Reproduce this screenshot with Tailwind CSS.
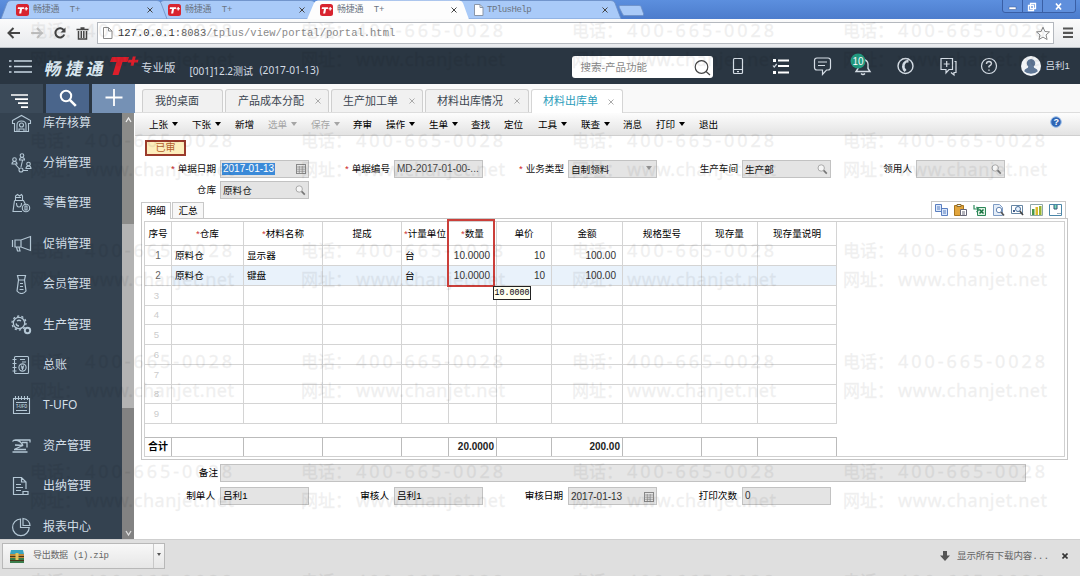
<!DOCTYPE html>
<html>
<head>
<meta charset="utf-8">
<title>畅捷通 T+</title>
<script src="https://cdn.jsdelivr.net/npm/@tailwindcss/browser@4"></script>
</head>
<body class="relative flex h-[576px] w-[1080px] flex-col overflow-hidden bg-white font-['Liberation_Sans','Noto_Sans_CJK_SC',sans-serif] text-[9.6px] leading-none text-black">

<svg class="hidden">
  <defs>
    <g id="fav"><rect width="13" height="12" rx="2.5" fill="#d8242f"/><path d="M2 3.2h6.2l-.4 1.9H6.1L5.2 9.6H3.1L4 5.1H1.7zM9.6 3h1.2v1.2H12v1.1h-1.2v1.2H9.6V5.3H8.5V4.2h1.1z" fill="#fff"/></g>
    <g id="x"><path d="M.5.5l5 5M5.5.5l-5 5" fill="none" stroke="currentColor"/></g>
    <g id="lens"><circle cx="4.2" cy="4" r="3.2" fill="#f6f6f6" stroke="#aaa" stroke-width="1"/><path d="M6.600 6.400l3.200 3.200" stroke="#777" stroke-width="1.700"/></g>
    <g id="cal"><rect x=".5" y=".5" width="9" height="9" fill="#e4e4e4" stroke="#888"/><path d="M1 3h8M1 5.200h8M1 7.300h8M3.300 2v7M6.200 2v7" stroke="#888" stroke-width=".7"/></g>
    <g id="wm" fill="#000" stroke="#000" stroke-width=".35" font-family="'Noto Sans','Noto Sans CJK SC',sans-serif" font-size="18">
      <text x="0" y="7" font-size="17">电话：</text><text x="55" y="7" textLength="147">400-665-0028</text>
      <text x="0" y="36" font-size="17">网址：</text><text x="55" y="36" textLength="149">www.chanjet.net</text>
    </g>
  </defs>
</svg>

<!-- browser tabs -->
<div class="relative h-[19px] shrink-0 bg-linear-to-b from-[#5c8fde] to-[#4c7ccc]">
  <svg class="absolute left-0 top-0" width="660" height="19">
    <g fill="#a9caf8" stroke="#6d8fc4" stroke-width=".8">
      <path d="M461 19l-6-16q-1-2.500 2-2.500H611q3 0 4 2.500l6 16z"/>
      <path d="M154 19l6-16q1-2.500 4-2.500H311q3 0 4 2.500l6 16z"/>
      <path d="M1 19l6-16q1-2.500 4-2.500H157q3 0 4 2.500l6 16z"/>
      <path d="M620 5.500h19q1.500 0 2 1l2.500 7q.5 2-1 2h-18q-1.500 0-2-1.500l-3.500-7q0-1.500 1-1.500z"/>
    </g>
    <path d="M307 19.500l7-16.500q1-2.500 4-2.500H459q3 0 4 2.500l6 16.500z" fill="#fdfdfd"/>
  </svg>
  <div class="relative flex h-full items-center pl-4 pt-px font-['Liberation_Mono','Noto_Sans_CJK_SC',monospace] text-[9px] text-[#6a7482]">
    <div class="flex w-[152px] items-center"><svg width="13" height="12"><use href="#fav"/></svg><span class="ml-1 mt-px flex-1 whitespace-pre tracking-[-0.2px]">畅捷通  T+</span><svg class="mr-[15px] text-[#444]" width="6" height="6"><use href="#x"/></svg></div>
    <div class="flex w-[152px] items-center"><svg width="13" height="12"><use href="#fav"/></svg><span class="ml-1 mt-px flex-1 whitespace-pre tracking-[-0.2px]">畅捷通  T+</span><svg class="mr-[15px] text-[#444]" width="6" height="6"><use href="#x"/></svg></div>
    <div class="flex w-[152px] items-center"><svg width="13" height="12"><use href="#fav"/></svg><span class="ml-1 mt-px flex-1 whitespace-pre tracking-[-0.2px]">畅捷通  T+</span><svg class="mr-[15px] text-[#444]" width="6" height="6"><use href="#x"/></svg></div>
    <div class="flex w-[152px] items-center pl-0.5"><svg width="10" height="12"><path d="M.5.5h5.500l3 3v8h-8.500z" fill="#fff" stroke="#8a96a8"/><path d="M6 .5v3h3" fill="none" stroke="#8a96a8"/></svg><span class="ml-[3px] mt-px flex-1 tracking-[-0.5px]">TPlusHelp</span><svg class="mr-[16px] text-[#444]" width="6" height="6"><use href="#x"/></svg></div>
  </div>
  <svg class="absolute right-[3px] top-0" width="75" height="13">
    <path d="M.5 0v10q0 2.500 2.500 2.500H71q2.500 0 2.500-2.500V0M20.500 0v12M40.500 0v12" fill="#5f8fdc" stroke="#3a5fa5"/>
    <rect x="7" y="7" width="7" height="2.500" fill="#fff" stroke="#38568e" stroke-width=".5"/>
    <path d="M28.500 3.500h5v5h-5zM26.500 5.500h5v5h-5z" fill="#5f8fdc" stroke="#fff" stroke-width="1.300"/>
    <path d="M54 3.500l5 6M59 3.500l-5 6" stroke="#fff" stroke-width="1.700"/>
  </svg>
</div>

<!-- address bar -->
<div class="flex h-[29px] shrink-0 items-center border-b border-[#b9bec4] bg-linear-to-b from-[#fbfbfb] to-[#e8eaed] pl-[7px]">
  <svg width="86" height="16" fill="none" stroke="#454545" stroke-width="2">
    <path d="M1.500 8H13M6.500 3l-5 5 5 5"/>
    <path d="M24 8h11M30 3l5 5-5 5" stroke="#c6c6c6"/>
    <path d="M57 5.500a4.600 4.600 0 1 0 .3 4"/><path d="M58.500 2.500v5h-5z" fill="#454545" stroke="none"/>
    <path d="M69.500 4.500h12M73.500 3h4M71.500 6v8h8V6M74.300 6v7M76.800 6v7" stroke-width="1.500"/>
  </svg>
  <div class="ml-1 flex h-[22px] w-[957px] items-center border border-[#b4b8be] bg-white pl-[5px] font-['Liberation_Mono',monospace] text-[10.5px]">
    <svg width="10" height="12"><path d="M.5.500h5l3.500 3.500v7.500h-8.500z" fill="#fff" stroke="#8a8a8a"/><path d="M5.500.5v3.500H9" fill="none" stroke="#8a8a8a"/></svg>
    <span class="ml-[5px] mt-px flex-1 text-[#8a8a8a]"><span class="text-[#333]">127.0.0.1</span><span class="text-[#666]">:8083</span>/tplus/view/portal/portal.html</span>
    <svg class="mr-[2px]" width="16" height="15"><path d="M8 1.200l1.900 4.300 4.600.4-3.500 3 1.100 4.600L8 11.100l-4.100 2.400L5 8.900l-3.500-3 4.600-.4z" fill="#fff" stroke="#888"/></svg>
  </div>
  <svg class="ml-[9px]" width="10" height="12"><path d="M0 1.500h10M0 5.800h10M0 10h10" stroke="#555" stroke-width="2.200"/></svg>
</div>

<!-- application header -->
<header class="flex h-9 shrink-0 items-center bg-[#2a3642] pl-[9px] text-[#d5dde5]">
  <svg class="mt-px" width="23" height="15" stroke="#c9d8e4" stroke-width="1.600"><path d="M0 2h2.500M0 7.500h2.500M0 13h2.500M5 2h18M5 7.500h18M5 13h18"/></svg>
  <span class="ml-[13px] mt-[3px] w-[63px] -skew-x-12 whitespace-nowrap text-[17px] font-bold tracking-[4px] text-[#d9e7f0] [font-family:'Noto_Sans_CJK_SC',sans-serif]">畅捷通</span>
  <svg width="32" height="22"><path d="M4 2h17l-1.500 5h-5l-4 13H4.500l4-13H2z" fill="#dd1e2b"/><path d="M24.800 1.500h3l-.8 3.200h3.500l-.7 2.800h-3.500l-.8 3.200h-3l.8-3.200h-3.500l.7-2.800H24z" fill="#dd1e2b"/></svg>
  <span class="ml-[1px] mt-[5px] text-[11.5px]">专业版</span>
  <span class="ml-[14px] mt-[9px] w-[70px] text-[10px] [font-family:'Noto_Sans','Noto_Sans_CJK_SC',sans-serif]">[001]12.2测试</span>
  <span class="mt-[9px] w-[312px] text-[10.2px] [font-family:'Noto_Sans',sans-serif]">(2017-01-13)</span>
  <div class="mt-[2px] flex h-[22px] w-[141px] items-center justify-between rounded-[3px] bg-white pl-[9px] pr-[2px] text-[10.500px] text-[#888]"><span class="mt-px">搜索-产品功能</span><svg width="17" height="17" fill="none" stroke="#444" stroke-width="1.200"><circle cx="7.500" cy="8" r="6.300"/><path d="M12 12.500l4 3.500"/></svg></div>
  <svg class="ml-[14px] -mt-px" width="278" height="34" fill="none" stroke="#d5dde5" stroke-width="1.200">
    <rect x="6.500" y="9.500" width="9" height="15" rx="1"/><path d="M7 20.500h8M10 22.700h2"/>
    <path d="M51 11.500h11M51 17h11M51 23.500h11" stroke="#fff" stroke-width="1.800"/><path d="M46 10h3v3h-3zM46 22h3v3h-3z" fill="#fff" stroke="none"/><path d="M46 16.500l1.200 1.500 2.500-3"/>
    <path d="M90 9h11q2.500 0 2.500 2.500v7q0 2.500-2.500 2.500h-1.500l-4 4.500V21H90q-2.500 0-2.500-2.500v-7Q87.500 9 90 9zM91 13h9M91 16.500h7"/>
    <path d="M129 22.500h14l-2-3v-4.500q-.5-4-5-4.500-4.500.500-5 4.500v4.500zM134 24.500q2 2 4 0" stroke-width="1.400"/>
    <circle cx="178.500" cy="17" r="7.500" stroke-width="1.400"/><path d="M181.500 10.500q-7 1.500-6.500 7.500.5 3.500 2.500 5l2-2-1.700-2.200q-.8-3 1.300-5l2.400-.3z" fill="#d5dde5" stroke="none"/>
    <path d="M214 9.500h11.500v11H222l-3 3.500v-3.500h-5zM227.500 12.500h1.500v11h-2v2.500l-3-2.500M219.700 12v6M216.700 15h6"/>
    <circle cx="262" cy="17" r="7.500"/><path d="M259.500 15q0-2.500 2.500-2.500t2.500 2.300q0 1.200-2.500 2.500v1.200M262 20.500v1.300" stroke-width="1.400"/>
    <circle cx="131" cy="12" r="7.500" fill="#249e83" stroke="none"/><text x="125.500" y="15.500" font-size="10" fill="#fff" stroke="none">10</text>
  </svg>
  <svg class="ml-[16px]" width="20" height="20"><circle cx="10" cy="10" r="10" fill="#f2f5f8"/><path d="M10 3a4.200 4.200 0 0 1 2.700 7.400q0 1.600 1.800 2.200 2 .8 2.300 2.600a10 10 0 0 1-13.600 0q.3-1.800 2.300-2.600 1.800-.6 1.800-2.200A4.200 4.200 0 0 1 10 3z" fill="#5f7796"/></svg>
  <span class="ml-[5px] whitespace-nowrap text-[9.500px]">吕利1</span>
</header>

<div class="flex h-[455px] shrink-0">
  <!-- sidebar -->
  <aside class="flex w-[135px] shrink-0 flex-col bg-[#344250]">
    <div class="flex h-[29px] shrink-0 gap-[3px] bg-[#2a3642]">
      <div class="flex w-[43px] items-center justify-center bg-[#3b4a59] pt-1 pr-[4px]"><svg width="18" height="14" stroke="#fff" stroke-width="1.700"><path d="M0 1h17M4 5.200h13M7 9.200h10M10 13.200h7"/></svg></div>
      <div class="flex w-[43px] items-center justify-center bg-[#4a658b] pb-[2px]"><svg width="18" height="18" fill="none" stroke="#fff"><circle cx="7" cy="7" r="5.200" stroke-width="2"/><path d="M10.800 10.800l6 6" stroke-width="2.600"/></svg></div>
      <div class="flex w-[43px] items-center justify-center bg-[#7591b5] pb-px"><svg width="18" height="18" stroke="#fff" stroke-width="1.800"><path d="M9 0v17M.5 8.500h17"/></svg></div>
    </div>
    <div class="flex h-[426px] overflow-hidden">
      <nav class="-mt-[10.500px] w-[122px] text-[12px] text-[#d3dfe8]">
        <div class="flex h-[40.4px] items-center pl-[11px]"><svg class="mr-[11px]" width="21" height="20" fill="none" stroke="#b4c7d5" stroke-width="1.100"><path d="M1.500 7.500l9-5 9 5v3h-2v8h-14v-8h-2z"/><path d="M6 18v-6q0-4 4.500-4t4.500 4v6M8 18v-2h5v2"/><circle cx="10.500" cy="12" r="2"/></svg>库存核算</div>
        <div class="flex h-[40.4px] items-center pl-[11px]"><svg class="mr-[11px]" width="21" height="20" fill="none" stroke="#b4c7d5" stroke-width="1.100"><circle cx="3.500" cy="6.500" r="1.800"/><circle cx="11" cy="2.500" r="1.800"/><circle cx="17.500" cy="11" r="1.800"/><path d="M1 11q0-2.500 2.500-2.500T6 11zM8.500 7q0-2.500 2.500-2.500T13.500 7zM15 15.500q0-2.500 2.500-2.500t2.500 2.500zM4.500 11.500l4 4.500M10 14l1.500-6.500M12 17.500h5"/><circle cx="10" cy="17" r="2"/></svg>分销管理</div>
        <div class="flex h-[40.400px] items-center pl-[11px]"><svg class="mr-[11px]" width="21" height="20" fill="none" stroke="#b4c7d5" stroke-width="1.100"><path d="M3.500 7.500h9l2 4M3.500 7.500l-1.500 11h9M4.500 7V3l2-1.500L8.500 3l2-1.500L11.500 3v4M5 4.500h5M5.500 10q0 4 2.500 4t2.500-4"/><circle cx="15" cy="15" r="3.700"/><path d="M14 13h2v4h-2z"/></svg>零售管理</div>
        <div class="flex h-[40.400px] items-center pl-[11px]"><svg class="mr-[11px]" width="21" height="20" fill="none" stroke="#b4c7d5" stroke-width="1.200"><path d="M1.500 6v7M4 6h6l9.500-3.500v14L10 13H4zM10 6v7M5.500 13l1 4h2.500l-1-4"/></svg>促销管理</div>
        <div class="flex h-[40.400px] items-center pl-[11px]"><svg class="mr-[11px]" width="21" height="20" fill="none" stroke="#b4c7d5" stroke-width="1.200"><path d="M6.500 1.500h8l-1 4.500h-6zM7.500 6l-1.500 11q2 2.500 4.500 2.500t4.500-2.500L13.500 6M9 9.500h3M9 12.500h3M8.500 15.500h4"/></svg>会员管理</div>
        <div class="flex h-[40.400px] items-center pl-[11px]"><svg class="mr-[11px]" width="21" height="20" fill="none" stroke="#b4c7d5" stroke-width="1.300"><circle cx="8" cy="8" r="5.700"/><circle cx="8" cy="8" r="7" stroke-dasharray="2.200 2.200"/><path d="M6 6q2-1.500 4 0M5 8.500q.5 2.500 3 2.500"/><circle cx="16.500" cy="15.500" r="2.700" stroke-width="2"/></svg>生产管理</div>
        <div class="flex h-[40.400px] items-center pl-[11px]"><svg class="mr-[11px]" width="21" height="20" fill="none" stroke="#b4c7d5" stroke-width="1.100"><rect x="3.500" y="1.500" width="14" height="17" rx="1"/><path d="M1.500 4.500h4M1.500 8.500h4M1.500 12.500h4M1.500 16h4M9 4.500h5M11 7h4"/><circle cx="11.500" cy="12.500" r="3.600"/><path d="M10 10.500l1.500 2 1.500-2M11.500 12.500v2.500M10 13h3"/></svg>总账</div>
        <div class="flex h-[40.400px] items-center pl-[11px]"><svg class="mr-[11px]" width="21" height="20" fill="none" stroke="#b4c7d5" stroke-width="1.100"><path d="M2.500 3.500h16v15h-16zM4.500 1v4M7.500 1v4M10.500 1v4M13.500 1v4M16.500 1v4M5 7.500h11M5 15.500h11"/><text x="5" y="13.300" font-size="4.500" font-weight="700" textLength="11" lengthAdjust="spacingAndGlyphs" fill="#b4c7d5" stroke="none">T-UFO</text></svg><span class="[font-family:'Noto_Sans',sans-serif]">T-UFO</span></div>
        <div class="flex h-[40.400px] items-center pl-[11px]"><svg class="mr-[11px]" width="21" height="20" fill="none" stroke="#b4c7d5" stroke-width="1.300"><path d="M1.500 16h15M3 13.500h12M4 13l8-3.500-8-.5M1.500 5.500q1-1.500 3-1.500h15M4.500 4q5 .5 7.500 5.500M11 6.500l5 0v5M19 4v2.500"/></svg>资产管理</div>
        <div class="flex h-[40.400px] items-center pl-[11px]"><svg class="mr-[11px]" width="21" height="20" fill="none" stroke="#b4c7d5" stroke-width="1.200"><path d="M11.500 18.500h-9v-17h8l4.500 4.500v7M10.500 1.500V6H15M5 8.500h5M5 11.500h7M5 14.500h5M12 15.500h5v3h-5z"/></svg>出纳管理</div>
        <div class="flex h-[40.400px] items-center pl-[11px]"><svg class="mr-[11px]" width="21" height="20" fill="none" stroke="#b4c7d5" stroke-width="1.200"><path d="M9.500 2a8.300 8.300 0 1 0 8.700 8.500H9.500z"/><path d="M12 1.500v7h7q-.5-6-7-7z"/></svg>报表中心</div>
      </nav>
      <div class="flex w-[12px] flex-col bg-[#b3b3b3]">
        <div class="flex h-[111px] justify-center bg-[#8b8b89] pt-[4px]"><svg width="7" height="6" fill="none" stroke="#eee" stroke-width="1.300"><path d="M1 5l2.500-4L6 5"/></svg></div>
        <div class="h-[184px]"></div>
        <div class="flex flex-1 items-end justify-center bg-[#828282] pb-[3px]"><svg width="7" height="6" fill="none" stroke="#ddd" stroke-width="1.300"><path d="M1 1l2.500 4L6 1"/></svg></div>
      </div>
      <div class="w-px bg-white"></div>
    </div>
  </aside>

  <main class="flex min-w-0 flex-1 flex-col">
    <!-- page tabs -->
    <div class="flex h-[29px] shrink-0 items-end border-b border-[#ddd] bg-[#f9f9f9] pl-[7px] text-[11px] text-[#3b4550]">
      <div class="mr-[2px] flex h-[23px] w-[81px] items-center rounded-t-[3px] border border-b-0 border-[#cfcfcf] bg-[#f1f1f1] pl-[12px]">我的桌面</div>
      <div class="mr-[2px] flex h-[23px] w-[104px] items-center justify-between rounded-t-[3px] border border-b-0 border-[#cfcfcf] bg-[#f1f1f1] pl-[12px] pr-[7px]">产品成本分配<svg class="text-[#aaa]" width="6" height="6"><use href="#x"/></svg></div>
      <div class="mr-[2px] flex h-[23px] w-[92px] items-center justify-between rounded-t-[3px] border border-b-0 border-[#cfcfcf] bg-[#f1f1f1] pl-[11px] pr-[7px]">生产加工单<svg class="text-[#aaa]" width="6" height="6"><use href="#x"/></svg></div>
      <div class="mr-[2px] flex h-[23px] w-[104px] items-center justify-between rounded-t-[3px] border border-b-0 border-[#cfcfcf] bg-[#f1f1f1] pl-[11px] pr-[8px]">材料出库情况<svg class="text-[#aaa]" width="6" height="6"><use href="#x"/></svg></div>
      <div class="-mb-px flex h-[24px] w-[92px] items-center justify-between rounded-t-[3px] border border-b-0 border-[#d5d5d5] bg-white pl-[11px] pr-[8px] text-[#2b9dbb]">材料出库单<svg class="text-[#aaa]" width="6" height="6"><use href="#x"/></svg></div>
    </div>
    <!-- command bar -->
    <div class="flex h-[23px] shrink-0 items-center border-b border-[#cfcfcf] bg-linear-to-b from-[#fdfdfd] to-[#e3e3e3] pl-[14px] pt-px">
      <span class="w-[43px]">上张<i class="ml-1 inline-block border-x-[3px] border-t-[4px] border-x-transparent border-t-black align-[2px]"></i></span>
      <span class="w-[43px]">下张<i class="ml-1 inline-block border-x-[3px] border-t-[4px] border-x-transparent border-t-black align-[2px]"></i></span>
      <span class="w-[33px]">新增</span>
      <span class="w-[43px] text-[#a5a5a5]">选单<i class="ml-1 inline-block border-x-[3px] border-t-[4px] border-x-transparent border-t-[#a5a5a5] align-[2px]"></i></span>
      <span class="w-[42px] text-[#a5a5a5]">保存<i class="ml-1 inline-block border-x-[3px] border-t-[4px] border-x-transparent border-t-[#a5a5a5] align-[2px]"></i></span>
      <span class="w-[33px]">弃审</span>
      <span class="w-[43px]">操作<i class="ml-1 inline-block border-x-[3px] border-t-[4px] border-x-transparent border-t-black align-[2px]"></i></span>
      <span class="w-[42px]">生单<i class="ml-1 inline-block border-x-[3px] border-t-[4px] border-x-transparent border-t-black align-[2px]"></i></span>
      <span class="w-[33px]">查找</span>
      <span class="w-[34px]">定位</span>
      <span class="w-[43px]">工具<i class="ml-1 inline-block border-x-[3px] border-t-[4px] border-x-transparent border-t-black align-[2px]"></i></span>
      <span class="w-[42px]">联查<i class="ml-1 inline-block border-x-[3px] border-t-[4px] border-x-transparent border-t-black align-[2px]"></i></span>
      <span class="w-[33px]">消息</span>
      <span class="w-[43px]">打印<i class="ml-1 inline-block border-x-[3px] border-t-[4px] border-x-transparent border-t-black align-[2px]"></i></span>
      <span>退出</span>
      <svg class="ml-auto mr-[18px] -mt-[5px]" width="12" height="12"><circle cx="6" cy="6" r="5.300" fill="#2f66b5" stroke="#9fc0ea"/><text x="3.500" y="9.300" font-size="9" font-weight="700" fill="#fff">?</text></svg>
    </div>

    <!-- document header fields -->
    <div class="flex h-[24px] shrink-0 pl-[10px] pt-[4px]">
      <div class="flex h-[16px] w-[41px] items-center justify-center border-2 border-[#9b3b2c] bg-[#fdeebd] text-[10px] text-[#b4602c]">已审</div>
    </div>
    <div class="grid shrink-0 grid-cols-[repeat(5,174px)] gap-y-[3px] text-[#111]">
      <div class="flex items-center gap-[4px]"><span class="flex-1 text-right"><span class="mr-[3px] text-[#c22]">*</span>单据日期</span><div class="flex h-[18px] w-[89px] items-center justify-between border border-[#c2c2c2] bg-[#e4e4e4] pl-px pr-[2px] text-[10px]"><span class="bg-[#3b8ad8] px-px py-px text-white">2017-01-13</span><svg width="10" height="10"><use href="#cal"/></svg></div></div>
      <div class="flex items-center gap-[4px]"><span class="flex-1 text-right"><span class="mr-[3px] text-[#c22]">*</span>单据编号</span><div class="flex h-[18px] w-[89px] items-center border border-[#c2c2c2] bg-[#e4e4e4] pl-[2px] text-[10px] text-[#444]">MD-2017-01-00-...</div></div>
      <div class="flex items-center gap-[4px]"><span class="flex-1 text-right"><span class="mr-[3px] text-[#c22]">*</span>业务类型</span><div class="flex h-[18px] w-[89px] items-center justify-between border border-[#c2c2c2] bg-[#e4e4e4] pl-[2px] pr-[4px] pt-px">自制领料<i class="-mt-1 border-x-[3px] border-t-[4px] border-x-transparent border-t-[#999]"></i></div></div>
      <div class="flex items-center gap-[4px]"><span class="flex-1 text-right">生产车间</span><div class="flex h-[18px] w-[89px] items-center justify-between border border-[#c2c2c2] bg-[#e4e4e4] pl-[2px] pr-[2px] pt-px">生产部<svg width="11" height="11"><use href="#lens"/></svg></div></div>
      <div class="flex items-center gap-[4px]"><span class="flex-1 text-right">领用人</span><div class="flex h-[18px] w-[89px] items-center justify-end border border-[#c2c2c2] bg-[#e4e4e4] pr-[2px] pt-px"><svg width="11" height="11"><use href="#lens"/></svg></div></div>
      <div class="flex items-center gap-[4px]"><span class="flex-1 text-right">仓库</span><div class="flex h-[18px] w-[89px] items-center justify-between border border-[#c2c2c2] bg-[#e4e4e4] pl-[2px] pr-[2px] pt-px">原料仓<svg width="11" height="11"><use href="#lens"/></svg></div></div>
    </div>

    <!-- detail tabs and grid tools -->
    <div class="flex h-[19px] shrink-0 items-end pl-[6px]">
      <div class="z-10 -mb-px flex h-[17px] w-[30px] items-center justify-center border border-b-0 border-[#c8c8c8] bg-white">明细</div>
      <div class="ml-px flex h-[16px] w-[32px] items-center justify-center border border-b-0 border-[#c8c8c8] bg-[#f7f7f7]">汇总</div>
      <div class="ml-auto mr-[14px] flex h-[17px] w-[135px] items-center justify-between border border-b-0 border-[#c8c8c8] px-[3px]">
        <svg width="13" height="12"><path d="M.5.500h6v7h-6zM6.500 4.500h6v7h-6z" fill="#dbe8fa" stroke="#5b7fc0"/><path d="M2 3h3M2 5h3M8 7h3M8 9h3" stroke="#5b7fc0"/></svg>
        <svg width="13" height="12"><path d="M.5 1.500h9v10h-9z" fill="#e2a53c" stroke="#a8751e"/><path d="M3 .5h4v2H3z" fill="#eee" stroke="#8a6a2a"/><path d="M6.500 5.500h6v6h-6z" fill="#fff" stroke="#667"/><path d="M8 8h3M8 10h3" stroke="#667"/></svg>
        <svg width="13" height="12"><path d="M4.500 3.500h8v8h-8z" fill="#dff1e3" stroke="#2b8757"/><path d="M6.500 5.500l4 4M10.500 5.500l-4 4" stroke="#14703e" stroke-width="1.500"/><path d="M1 1v4h4M3.500 3L6 5.500 3.500 8" fill="none" stroke="#2d8a5c" stroke-width="1.200"/></svg>
        <svg width="13" height="12"><path d="M1.500.500h6l3 3v8h-9z" fill="#e4edf8" stroke="#7f9cc4"/><circle cx="7" cy="6" r="2.700" fill="#fff" stroke="#6686b4"/><path d="M9 8l3 3.500" stroke="#555" stroke-width="1.600"/></svg>
        <svg width="13" height="12"><path d="M.5 1.500h11v8H.5z" fill="#fff" stroke="#6686a4"/><path d="M2 8V6h2v2z" fill="#46608c"/><circle cx="7" cy="5" r="2.500" fill="#e9f3ff" stroke="#466f9c"/><path d="M8.800 7l3.200 4" stroke="#444" stroke-width="1.600"/></svg>
        <svg width="13" height="12"><path d="M.5.500h12v11H.5z" fill="#fff" stroke="#8ea6a6"/><path d="M2 5h2.500v6H2z" fill="#489848"/><path d="M5.500 3H8v8H5.500z" fill="#ddb92c"/><path d="M9 2h2.500v9H9z" fill="#98b532"/></svg>
        <svg width="13" height="12"><path d="M.5.500h12v11H.5z" fill="#fff" stroke="#4a86a8"/><path d="M5 1v4h3V1M8.500 9.500h1M10.500 9.500h1" fill="#7db" stroke="#357"/></svg>
      </div>
    </div>
    <div class="relative ml-[6px] h-[242px] w-[927px] shrink-0 border border-[#c6c6c6] p-[2px]">
      <div class="h-[236px] border border-[#d0d0d0]">
        <div id="grid" class="w-[692px]"></div>
        <div class="h-[13px]"></div>
        <div id="totals" class="w-[692px] border-t border-[#bbb] font-bold"></div>
      </div>
      <div class="absolute left-[305px] top-0 h-[68px] w-[48px] border-2 border-[#cb3f3a]"></div>
      <div class="absolute left-[351px] top-[67px] flex h-[14px] w-[38px] items-center justify-center border border-[#222] bg-[#fffff0] font-['Liberation_Mono',monospace] text-[8.3px]">10.0000</div>
    </div>

    <!-- document footer fields -->
    <div class="mt-[4px] flex shrink-0 items-center gap-[2px]"><span class="w-[83px] text-right">备注</span><div class="h-[18px] w-[806px] border border-[#c2c2c2] bg-[#e6e6e6]"></div></div>
    <div class="mt-[5px] grid shrink-0 grid-cols-[repeat(4,174px)]">
      <div class="flex items-center gap-[5px]"><span class="flex-1 text-right">制单人</span><div class="flex h-[18px] w-[89px] items-center border border-[#c2c2c2] bg-[#e4e4e4] pl-[2px]">吕利1</div></div>
      <div class="flex items-center gap-[5px]"><span class="flex-1 text-right">审核人</span><div class="flex h-[18px] w-[89px] items-center border border-[#c2c2c2] bg-[#e4e4e4] pl-[2px]">吕利1</div></div>
      <div class="flex items-center gap-[5px]"><span class="flex-1 text-right">审核日期</span><div class="flex h-[18px] w-[89px] items-center justify-between border border-[#c2c2c2] bg-[#e4e4e4] pl-[2px] pr-[2px] pt-px text-[10px] text-[#333]">2017-01-13<svg width="10" height="10"><use href="#cal"/></svg></div></div>
      <div class="flex items-center gap-[5px]"><span class="flex-1 text-right">打印次数</span><div class="flex h-[18px] w-[89px] items-center border border-[#c2c2c2] bg-[#e4e4e4] pl-[2px] text-[10px] text-[#333]">0</div></div>
    </div>
  </main>
</div>

<!-- download shelf -->
<footer class="flex h-[37px] shrink-0 items-start border-t border-[#cfcfcf] bg-[#dfdfdf] font-['Liberation_Mono','Noto_Sans_CJK_SC',monospace] text-[9px] text-[#666]">
  <div class="ml-[2px] mt-[3px] flex h-[26px] w-[163px] items-center border border-[#b8b8b8] bg-linear-to-b from-[#f8f8f8] to-[#e6e6e6]">
    <svg class="ml-[7px]" width="14" height="13"><path d="M1 0h12l1 4H0z" fill="#3ba4c0"/><path d="M0 4h14v4H0z" fill="#c08a3a"/><path d="M0 8h14v5H0z" fill="#3b7d4d"/><path d="M0 6.500h14M0 10.500h14" stroke="#493418"/><path d="M5.500 3h3v7h-3z" fill="#e4c25c"/></svg>
    <span class="ml-[9px] flex-1 whitespace-pre tracking-[-0.3px]">导出数据 (1).zip</span>
    <div class="flex h-full w-[11px] items-center justify-center border-l border-[#c8c8c8]"><i class="-mt-[3px] border-x-2 border-t-[3px] border-x-transparent border-t-[#555]"></i></div>
  </div>
  <div class="ml-auto mt-[10px] flex items-center">
    <svg width="10" height="10"><path d="M3 0h4v4.500h3L5 10 0 4.500h3z" fill="#555"/></svg>
    <span class="ml-[7px] mt-[2px] w-[105px] whitespace-nowrap text-[9.500px] tracking-[-0.1px]">显示所有下载内容...</span>
    <svg class="mr-[12px] text-[#333]" width="6" height="6" stroke-width="1.600"><use href="#x"/></svg>
  </div>
</footer>

<!-- watermark -->
<svg class="pointer-events-none absolute inset-0 opacity-[0.06]" width="1080" height="576" id="marks"></svg>

<script>
  const cols = 'grid grid-cols-[27px_72px_79px_79px_47px_48px_55px_71px_79px_56px_79px]';
  const heads = ['序号','*仓库','*材料名称','提成','*计量单位','*数量','单价','金额','规格型号','现存量','现存量说明'];
  const row1 = ['1','原料仓','显示器','','台','10.0000','10','100.00','','',''];
  const row2 = ['2','原料仓','键盘','','台','10.0000','10','100.00','','',''];
  const heights = ['h-[20px]','h-[20px]','h-[20px]','h-[19px]','h-[20px]','h-[20px]','h-[20px]','h-[19px]','h-[20px]'];
  const cell = 'flex items-center whitespace-nowrap border-r border-b border-[#d4d4d4] ';
  let html = `<div class="${cols} h-[24px]">` + heads.map(t =>
    `<div class="${cell}justify-center">${t.replace('*', '<span class="text-[#c33]">*</span>')}</div>`).join('') + '</div>';
  heights.forEach((h, r) => {
    const data = r === 0 ? row1 : r === 1 ? row2 : [String(r + 1)];
    html += `<div class="${cols} ${h}">`;
    for (let c = 0; c < 11; c++) {
      let k = c === 0 ? (r < 2 ? 'justify-center text-[#666] text-[10px] ' : 'justify-center text-[#ccc] pr-[3px] ')
        : c < 5 ? 'pl-[3px] ' : 'justify-end pr-[6px] text-[10px] text-[#333] ';
      if (r === 1 && c > 0) k += 'bg-[#e9f2fb] ';
      html += `<div class="${cell}${k}">${data[c] || ''}</div>`;
    }
    html += '</div>';
  });
  document.getElementById('grid').innerHTML = html;
  const sums = ['合计','','','','','20.0000','','200.00','','',''];
  document.getElementById('totals').innerHTML = `<div class="${cols} h-[18px]">` + sums.map((t, c) =>
    `<div class="flex items-center border-r border-[#bbb] ${c ? 'justify-end pr-[2px] text-[10px] text-[#222]' : 'justify-center text-[10px]'}">${t}</div>`).join('') + '</div>';
  let m = '';
  for (let y = 30; y < 600; y += 110.2) for (const x of [30, 301, 572, 843]) m += `<use href="#wm" x="${x}" y="${y}"/>`;
  document.getElementById('marks').innerHTML = m;
</script>
</body>
</html>
